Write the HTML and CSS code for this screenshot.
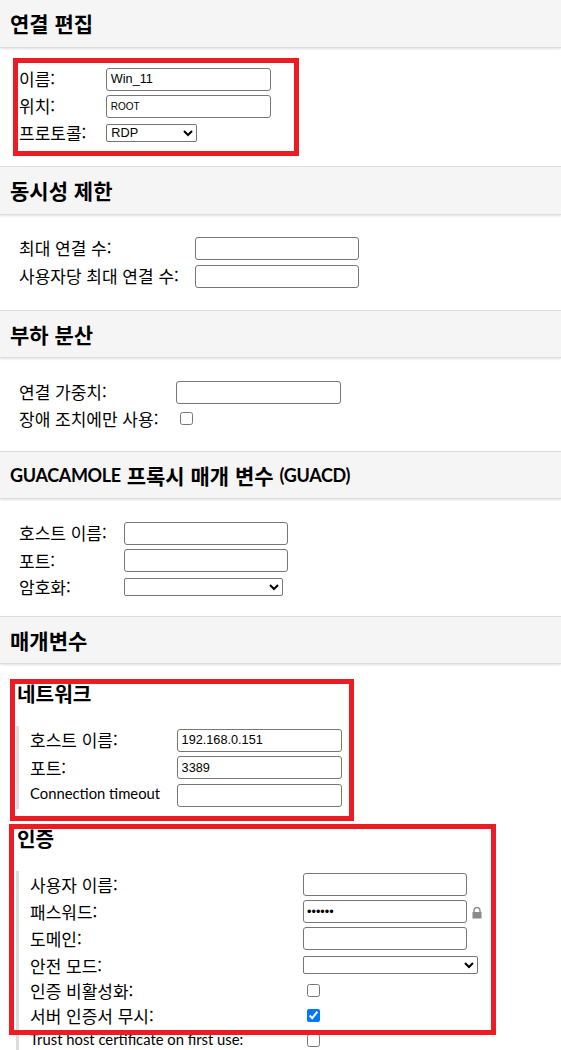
FILE: index.html
```html
<!DOCTYPE html>
<html lang="ko">
<head>
<meta charset="utf-8">
<title>연결 편집</title>
<link rel="stylesheet" href="styles.css">
</head>
<body>
<div class="page">
  <h2 class="bar bar-first">연결 편집</h2>
  <div class="body body-first">
    <table class="form form-basic">
      <tr><th>이름:</th><td><input class="text" type="text" value="Win_11"></td></tr>
      <tr><th>위치:</th><td><input class="text small" type="text" value="ROOT"></td></tr>
      <tr class="short"><th>프로토콜:</th><td><select class="sel sel-proto"><option>RDP</option></select></td></tr>
    </table>
  </div>

  <h2 class="bar">동시성 제한</h2>
  <div class="body">
    <table class="form form-limit">
      <tr><th>최대 연결 수:</th><td><input class="text" type="text"></td></tr>
      <tr><th>사용자당 최대 연결 수:</th><td><input class="text" type="text"></td></tr>
    </table>
  </div>

  <h2 class="bar">부하 분산</h2>
  <div class="body body-load">
    <table class="form">
      <tr><th>연결 가중치:</th><td><input class="text" type="text"></td></tr>
      <tr class="short"><th>장애 조치에만 사용:</th><td><input class="check" type="checkbox"></td></tr>
    </table>
  </div>

  <h2 class="bar"><span class="latin">GUACAMOLE</span>&nbsp;프록시 매개 변수&nbsp;<span class="latin">(GUACD)</span></h2>
  <div class="body body-guacd">
    <table class="form form-tight">
      <tr><th>호스트 이름:</th><td><input class="text" type="text"></td></tr>
      <tr><th>포트:</th><td><input class="text" type="text"></td></tr>
      <tr class="short"><th>암호화:</th><td><select class="sel sel-guacd"><option></option></select></td></tr>
    </table>
  </div>

  <h2 class="bar">매개변수</h2>
  <div class="params">
    <h3 class="sub">네트워크</h3>
    <table class="form form-tight group">
      <tr><th>호스트 이름:</th><td><input class="text" type="text" value="192.168.0.151"></td></tr>
      <tr><th>포트:</th><td><input class="text" type="text" value="3389"></td></tr>
      <tr><th class="latin-label">Connection timeout</th><td><input class="text" type="text"></td></tr>
    </table>
    <h3 class="sub">인증</h3>
    <table class="form group group-auth">
      <tr><th>사용자 이름:</th><td><input class="text" type="text"></td></tr>
      <tr><th>패스워드:</th><td class="pw"><input class="text" type="password" value="secret"><svg class="lock" viewBox="0 0 10 12" width="10" height="12"><path d="M2 5V3.500a3 3 0 0 1 6 0V5" fill="none" stroke="#8a8a8a" stroke-width="1.400"/><rect x="0.500" y="5" width="9" height="6.500" fill="#8a8a8a"/></svg></td></tr>
      <tr><th>도메인:</th><td><input class="text" type="text"></td></tr>
      <tr class="select-row"><th>안전 모드:</th><td><select class="sel sel-auth"><option></option></select></td></tr>
      <tr class="short"><th>인증 비활성화:</th><td><input class="check" type="checkbox"></td></tr>
      <tr class="short"><th>서버 인증서 무시:</th><td><input class="check" type="checkbox" checked></td></tr>
      <tr class="short"><th class="latin-label">Trust host certificate on first use:</th><td><input class="check" type="checkbox"></td></tr>
    </table>
  </div>

  <div class="mark mark-a"></div>
  <div class="mark mark-b"></div>
  <div class="mark mark-c"></div>
</div>
</body>
</html>
```
FILE: styles.css
```css
html, body { margin: 0; padding: 0; background: #fff; }
.page {
  position: relative;
  width: 561px;
  height: 1050px;
  overflow: hidden;
  font-family: "Noto Sans CJK KR", Lato, sans-serif;
  font-size: 17px;
  color: #000;
}
.bar {
  margin: 0;
  height: 48.5px;
  box-sizing: border-box;
  padding: 0 10px;
  display: flex;
  align-items: center;
  font-size: 21px;
  font-weight: 700;
  background: #f5f5f5;
  border-top: 1px solid #ddd;
  border-bottom: 1px solid #ddd;
  box-shadow: 0 1px 2px rgba(0,0,0,.12);
}
.bar-first { height: 47.500px; border-top: 0; }
.latin { font-family: Lato, sans-serif; font-size: 18px; letter-spacing: -.35px; }
.body { padding: 20px 0 20px 16px; }
.body-first { padding: 17.700px 0 20.300px 16px; }
.body-load { padding-bottom: 19.300px; }
.body-guacd { padding-bottom: 16.100px; }
.form { border-collapse: collapse; }
.form th {
  font-weight: 400;
  text-align: left;
  padding: 0 18px 1px 3px;
  white-space: nowrap;
  height: 27.670px;
  box-sizing: border-box;
  line-height: 1;
}
.form .latin-label { font-family: Lato, sans-serif; font-size: 14.800px; padding-bottom: 4px; }
.form td { padding: 0; height: 27.670px; }
.form .short th, .form .short td { height: 25.330px; }
.form-basic th { padding-right: 20px; padding-bottom: 2px; }
.form-limit th { padding-right: 16px; }
.form-tight th { padding-right: 17px; }
.text {
  display: block;
  box-sizing: border-box;
  width: 164.500px;
  height: 23px;
  margin: 0;
  padding: 1px 3.500px;
  border: 1px solid #767676;
  border-radius: 3px;
  font-family: "Liberation Sans", sans-serif;
  font-size: 12.700px;
  background: #fff;
}
.small { font-size: 10px; }
.sel {
  display: block;
  box-sizing: border-box;
  height: 18px;
  margin: 0;
  padding: 0;
  border: 1px solid #767676;
  border-radius: 2px;
  font-family: "Liberation Sans", sans-serif;
  font-size: 12.700px;
  background: #fff;
}
.sel-proto { width: 91px; }
.sel-guacd { width: 159px; }
.sel-auth { width: 175px; }
.check { display: block; margin: 0 0 0 4px; width: 13px; height: 13px; }
.params { padding: 0 0 0 17px; }
.sub { margin: 0; font-size: 20.200px; font-weight: 700; height: 62px; line-height: 60px; }
.group { border-left: 3px solid #ddd; margin-left: -1px; }
.form.group th { padding-left: 11px; }
.form.group-auth th { padding-bottom: 0; }
.form.group-auth .latin-label { padding-bottom: 3px; }
.group-auth th:first-child { min-width: 285px; }
.form.group-auth th, .form.group-auth td { height: 27px; }
.form.group-auth .select-row th, .form.group-auth .select-row td { height: 26px; }
.form.group-auth .short th, .form.group-auth .short td { height: 25px; }
.pw { position: relative; }
.lock { position: absolute; left: 169px; top: 9px; }
.mark { position: absolute; border: 5px solid #ed1c24; box-sizing: border-box; pointer-events: none; }
.mark-a { left: 13px; top: 58px; width: 286px; height: 98px; }
.mark-b { left: 10px; top: 679px; width: 344px; height: 142px; }
.mark-c { left: 9px; top: 824px; width: 487px; height: 211px; }
```
